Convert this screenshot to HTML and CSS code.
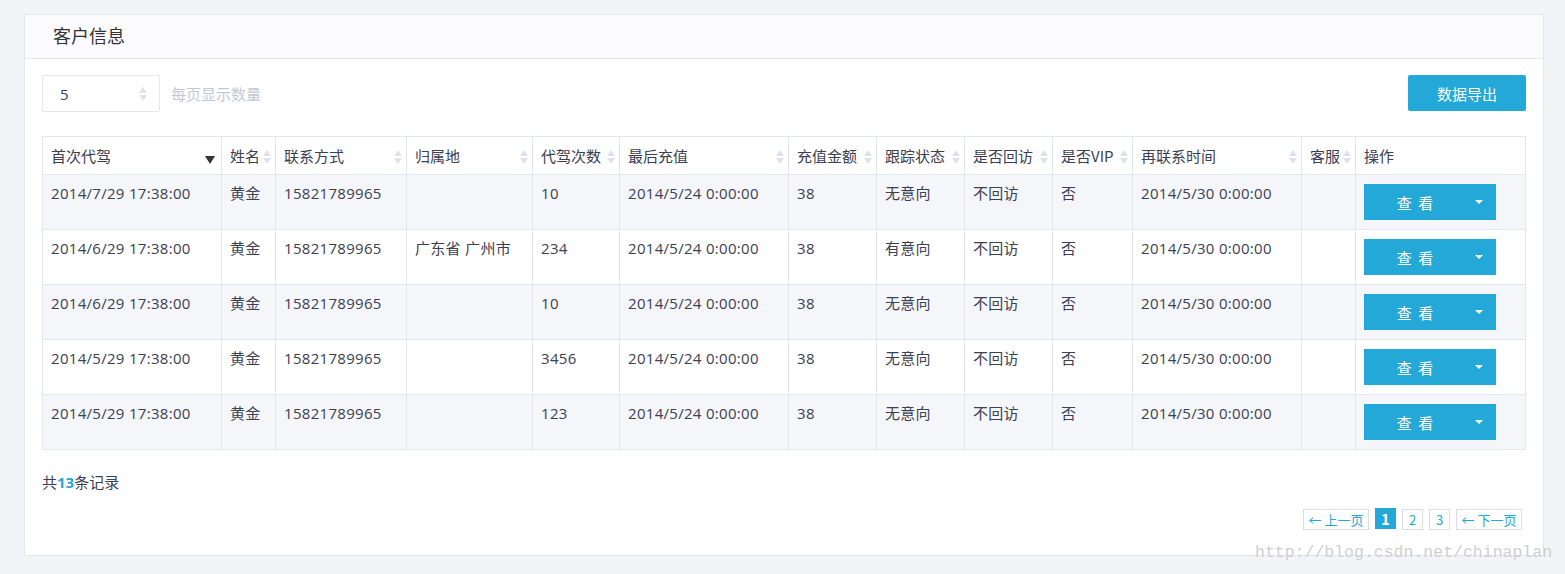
FILE: index.html
```html
<!DOCTYPE html>
<html lang="zh">
<head>
<meta charset="utf-8">
<link rel="stylesheet" href="styles.css">
</head>
<body>
<div class="panel">
  <div class="panel-head">客户信息</div>
  <div class="panel-body">
    <div class="toolbar">
      <div class="pagesize">
        <div class="select"><span>5</span><i class="spin"></i></div>
        <span class="ps-label">每页显示数量</span>
      </div>
      <button class="btn export">数据导出</button>
    </div>
    <table class="grid">
      <colgroup>
        <col style="width:179px"><col style="width:54px"><col style="width:131px"><col style="width:126px">
        <col style="width:87px"><col style="width:169px"><col style="width:88px"><col style="width:88px">
        <col style="width:88px"><col style="width:80px"><col style="width:169px"><col style="width:54px">
        <col style="width:170px">
      </colgroup>
      <thead>
        <tr>
          <th class="sorted">首次代驾<i class="desc"></i></th>
          <th class="sortable">姓名<i class="sort"></i></th>
          <th class="sortable">联系方式<i class="sort"></i></th>
          <th class="sortable">归属地<i class="sort"></i></th>
          <th class="sortable">代驾次数<i class="sort"></i></th>
          <th class="sortable">最后充值<i class="sort"></i></th>
          <th class="sortable">充值金额<i class="sort"></i></th>
          <th class="sortable">跟踪状态<i class="sort"></i></th>
          <th class="sortable">是否回访<i class="sort"></i></th>
          <th class="sortable">是否VIP<i class="sort"></i></th>
          <th class="sortable">再联系时间<i class="sort"></i></th>
          <th class="sortable">客服<i class="sort"></i></th>
          <th>操作</th>
        </tr>
      </thead>
      <tbody>
        <tr class="odd">
          <td>2014/7/29 17:38:00</td><td>黄金</td><td>15821789965</td><td></td><td>10</td><td>2014/5/24 0:00:00</td><td>38</td><td>无意向</td><td>不回访</td><td>否</td><td>2014/5/30 0:00:00</td><td></td>
          <td><div class="split"><span class="main">查 看</span><span class="caret"></span></div></td>
        </tr>
        <tr>
          <td>2014/6/29 17:38:00</td><td>黄金</td><td>15821789965</td><td>广东省 广州市</td><td>234</td><td>2014/5/24 0:00:00</td><td>38</td><td>有意向</td><td>不回访</td><td>否</td><td>2014/5/30 0:00:00</td><td></td>
          <td><div class="split"><span class="main">查 看</span><span class="caret"></span></div></td>
        </tr>
        <tr class="odd">
          <td>2014/6/29 17:38:00</td><td>黄金</td><td>15821789965</td><td></td><td>10</td><td>2014/5/24 0:00:00</td><td>38</td><td>无意向</td><td>不回访</td><td>否</td><td>2014/5/30 0:00:00</td><td></td>
          <td><div class="split"><span class="main">查 看</span><span class="caret"></span></div></td>
        </tr>
        <tr>
          <td>2014/5/29 17:38:00</td><td>黄金</td><td>15821789965</td><td></td><td>3456</td><td>2014/5/24 0:00:00</td><td>38</td><td>无意向</td><td>不回访</td><td>否</td><td>2014/5/30 0:00:00</td><td></td>
          <td><div class="split"><span class="main">查 看</span><span class="caret"></span></div></td>
        </tr>
        <tr class="odd">
          <td>2014/5/29 17:38:00</td><td>黄金</td><td>15821789965</td><td></td><td>123</td><td>2014/5/24 0:00:00</td><td>38</td><td>无意向</td><td>不回访</td><td>否</td><td>2014/5/30 0:00:00</td><td></td>
          <td><div class="split"><span class="main">查 看</span><span class="caret"></span></div></td>
        </tr>
      </tbody>
    </table>
    <div class="total">共<b>13</b>条记录</div>
    <div class="pager">
      <a class="pg wide">← 上一页</a>
      <a class="pg active">1</a>
      <a class="pg">2</a>
      <a class="pg">3</a>
      <a class="pg wide">← 下一页</a>
    </div>
  </div>
</div>
<div class="watermark">http://blog.csdn.net/chinaplan</div>
</body>
</html>
```
FILE: styles.css
```css
html, body {
  margin: 0;
  padding: 0;
}
body {
  background: #f3f4f8;
  font-family: "Open Sans", "Noto Sans CJK SC", sans-serif;
  font-size: 15px;
  color: #3b4052;
  height: 574px;
  position: relative;
  overflow: hidden;
}
.panel {
  margin: 14px 0 0 24px;
  width: 1520px;
  height: 542px;
  background: #fff;
  border: 1px solid #e3e6ef;
  box-sizing: border-box;
  display: flex;
  flex-direction: column;
}
.panel-head {
  height: 43px;
  background: #fbfbfd;
  border-bottom: 1px solid #e3e6ef;
  padding-left: 28px;
  font-family: "Noto Sans CJK SC", sans-serif;
  font-size: 18px;
  line-height: 40px;
  color: #333;
}
.panel-body {
  padding: 16px 17px 0 17px;
  display: flex;
  flex-direction: column;
}
.toolbar {
  display: flex;
  justify-content: space-between;
  align-items: flex-start;
  height: 37px;
  margin-bottom: 24px;
}
.pagesize {
  display: flex;
  align-items: center;
  gap: 11px;
}
.select {
  width: 118px;
  height: 37px;
  box-sizing: border-box;
  border: 1px solid #e3e6ef;
  border-radius: 2px;
  display: flex;
  align-items: center;
  justify-content: space-between;
  padding: 0 12px 0 17px;
  font-size: 15px;
}
.spin {
  position: relative;
  width: 8px;
  height: 14px;
}
.spin::before, .spin::after {
  content: "";
  position: absolute;
  left: 0;
  border-left: 4px solid transparent;
  border-right: 4px solid transparent;
}
.spin::before { top: 0; border-bottom: 6px solid #dfe2ea; }
.spin::after { bottom: 0; border-top: 6px solid #dfe2ea; }
.ps-label {
  color: #c3c8d6;
  font-family: "Noto Sans CJK SC", sans-serif;
  font-size: 15px;
}
.btn {
  border: 0;
  background: #23a8d8;
  color: #fff;
  font-family: "Noto Sans CJK SC", sans-serif;
  font-size: 15px;
  border-radius: 2px;
}
.export {
  width: 118px;
  height: 36px;
}
.grid {
  border-collapse: collapse;
  table-layout: fixed;
  width: 1483px;
}
.grid th, .grid td {
  border: 1px solid #e3e6ef;
  text-align: left;
  padding: 0 8px;
  white-space: nowrap;
  overflow: hidden;
}
.grid th {
  height: 37px;
  font-weight: normal;
  font-family: "Noto Sans CJK SC", sans-serif;
  position: relative;
  color: #3b4052;
  padding-right: 0;
}
.grid td {
  height: 36px;
  padding-top: 9px;
  padding-bottom: 9px;
  vertical-align: top;
  line-height: 19px;
  letter-spacing: 0.3px;
}
.grid tr.odd td { background: #f5f6fa; }
.sort {
  position: absolute;
  right: 4px;
  top: 13px;
  width: 8px;
  height: 14px;
}
.sort::before, .sort::after {
  content: "";
  position: absolute;
  left: 0;
  border-left: 4px solid transparent;
  border-right: 4px solid transparent;
}
.sort::before { top: 0; border-bottom: 6px solid #dfe2ea; }
.sort::after { bottom: 0; border-top: 6px solid #dfe2ea; }
.desc {
  position: absolute;
  right: 6px;
  top: 19px;
  border-left: 5px solid transparent;
  border-right: 5px solid transparent;
  border-top: 8px solid #333;
}
.split {
  width: 132px;
  height: 36px;
  background: #23a8d8;
  color: #fff;
  display: flex;
  align-items: center;
  font-family: "Noto Sans CJK SC", sans-serif;
  font-size: 15px;
  letter-spacing: 0;
}
.split .main {
  flex: 1;
  text-align: center;
  padding-left: 0;
  word-spacing: 3px;
}
.split .caret {
  width: 30px;
  display: flex;
  justify-content: center;
}
.split .caret::before {
  content: "";
  border-left: 4px solid transparent;
  border-right: 4px solid transparent;
  border-top: 4px solid #fff;
  margin-right: 4px;
}
.total {
  margin-top: 22px;
  font-family: "Noto Sans CJK SC", sans-serif;
  font-size: 15px;
  line-height: 20px;
  color: #3b4052;
}
.total b {
  color: #23a8d8;
  font-family: "Open Sans", sans-serif;
  font-weight: 700;
}
.pager {
  margin-top: 17px;
  display: flex;
  justify-content: flex-end;
  align-items: center;
  gap: 6px;
  padding-right: 4px;
}
.pg {
  height: 21px;
  min-width: 21px;
  box-sizing: border-box;
  border: 1px solid #dcdde2;
  color: #23a8d8;
  font-family: "Noto Sans CJK SC", sans-serif;
  font-size: 13px;
  display: flex;
  align-items: center;
  justify-content: center;
}
.pg.wide { width: 66px; }
.pg.active {
  background: #23a8d8;
  border-color: #23a8d8;
  color: #fff;
  font-weight: 700;
  font-size: 15px;
  height: 21px;
  margin-top: -2px;
}
.watermark {
  position: absolute;
  left: 1255px;
  top: 543px;
  font-family: "Liberation Mono", monospace;
  font-size: 16.5px;
  color: #cfcfcf;
  white-space: nowrap;
}
```
